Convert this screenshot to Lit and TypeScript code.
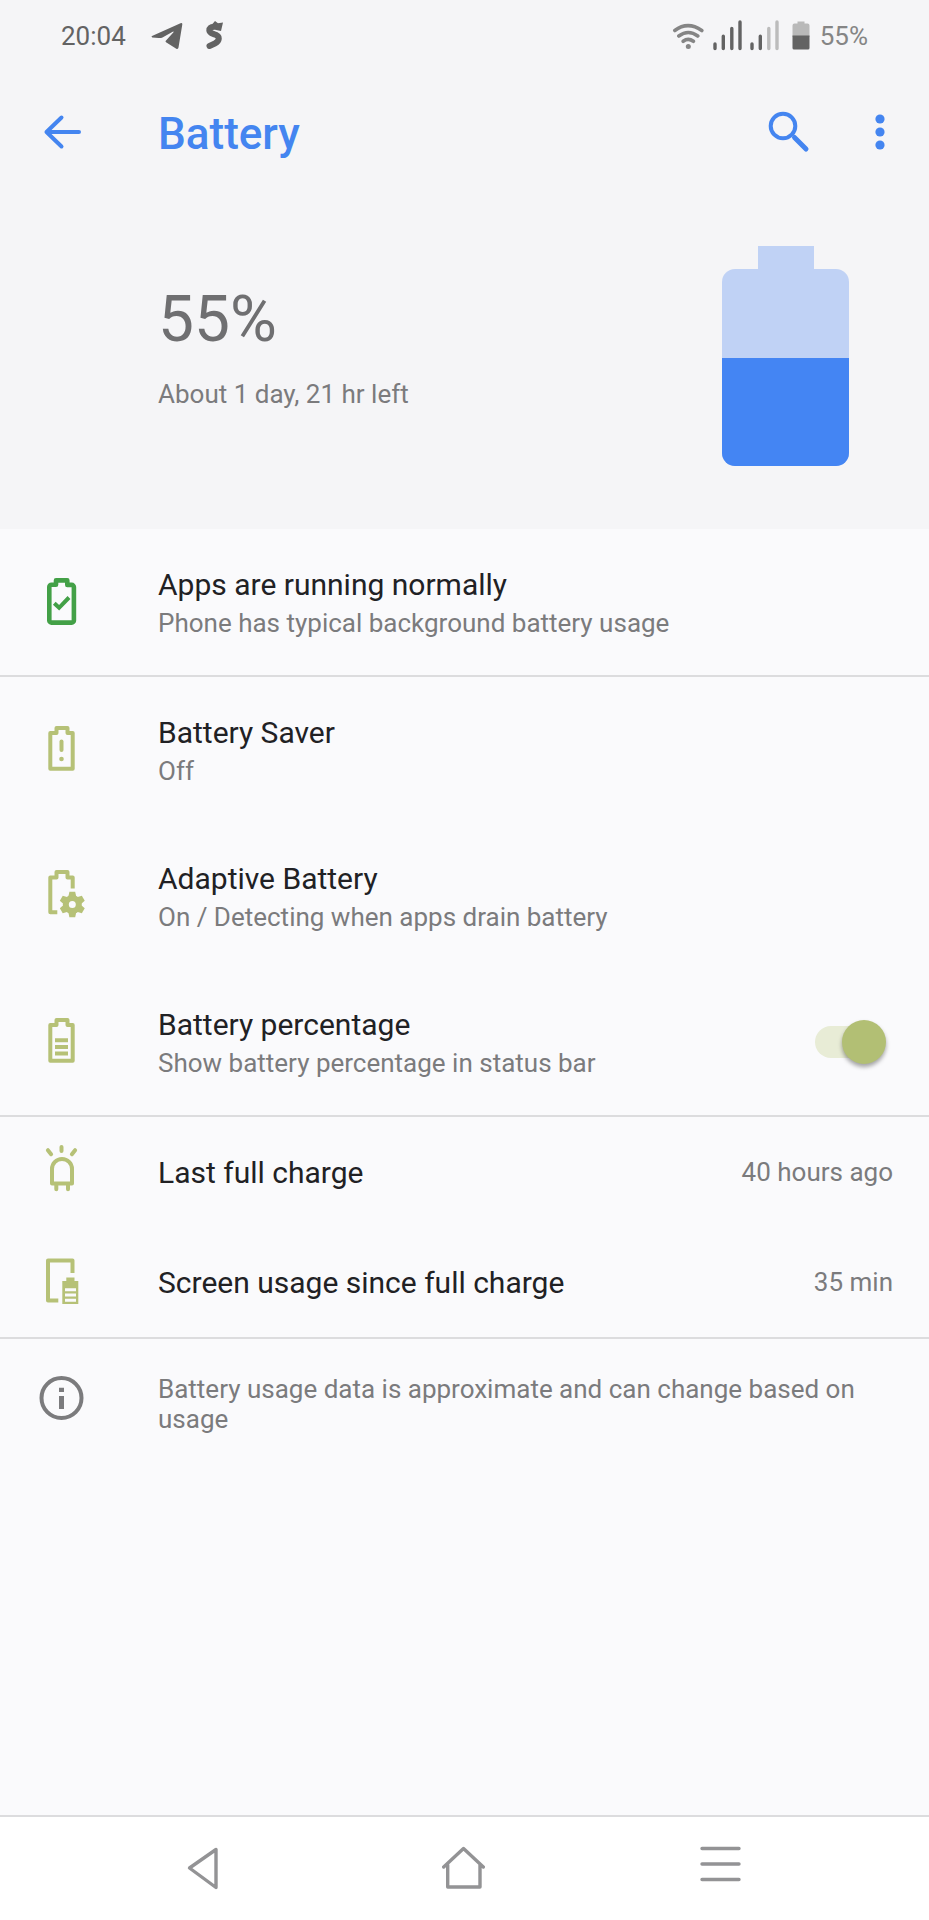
import { LitElement, html, svg, css, nothing, TemplateResult } from 'lit';
import { customElement, property, state } from 'lit/decorators.js';

const cell = svg`<path d="M19.5 2h11v5h5.2v35.7H13.3V7h6.2z" />`;

const icons: Record<string, TemplateResult> = {
  normal: html`
    <svg viewBox="0 0 48 48" class="line">
      <path d="M19 2.4h11.3v4.5h4.4a2.2 2.2 0 0 1 2.2 2.2v33.3a2.2 2.2 0 0 1-2.2 2.2H14.5a2.2 2.2 0 0 1-2.2-2.2V9a2.2 2.2 0 0 1 2.2-2.2H19z" stroke-width="4.6" />
      <path d="M17.3 25.3l4.8 4.5L32 19.5" stroke-linejoin="miter" />
    </svg>`,
  saver: html`
    <svg viewBox="0 0 48 48" class="line">
      ${cell}
      <path d="M24.5 15.5v8.5" stroke-linecap="round" />
      <circle class="solid" cx="24.5" cy="33" r="2.3" />
    </svg>`,
  adaptive: html`
    <svg viewBox="0 2 48 48" class="line">
      <path d="M35.7 18.5V7.5h-5.2V2h-11v5.5h-6.2v34.7h7" />
      <circle cx="35.3" cy="34.5" r="6.5" stroke-width="6" />
      ${[0, 60, 120, 180, 240, 300].map(
        (angle) => svg`<path class="solid" transform="rotate(${angle} 35.3 34.5)" d="M31.3 27l1.1-5.2h5.8l1.1 5.2z" />`
      )}
    </svg>`,
  percentage: html`
    <svg viewBox="0 0 48 48" class="line">
      ${cell}
      <path d="M18 22.2h13M18 29h13M18 35.6h13" />
    </svg>`,
  led: html`
    <svg viewBox="0 3 48 48" class="line">
      <path d="M15 38.6V24a10 10 0 0 1 20 0v14.6z" />
      <path d="M24.5 2v4M10.9 5.2l3.2 4M38.1 5.2l-3.2 4M19.3 40v4.3M31 40v4.3" stroke-linecap="round" />
    </svg>`,
  screen: html`
    <svg viewBox="0 0 48 48" class="line">
      <path d="M35.5 15V2.5H11v40h10.3" />
      <path class="solid" fill-rule="evenodd" d="M29.3 19.5h8.2V23h3.8v23h-16V23h4zM28 30.3v3h11v-3zM28 35.6v3h11v-3zM28 40.8v3h11v-3z" />
    </svg>`,
  info: html`
    <svg viewBox="0 0 48 48" class="line">
      <circle cx="24.5" cy="24" r="20" />
      <path d="M24.5 13.7v4.4M24.5 22v13" stroke-width="5" />
    </svg>`,
};

@customElement('setting-row')
export class SettingRow extends LitElement {
  @property() icon = '';
  @property() heading = '';
  @property() summary = '';
  @property() value = '';
  @property() tone = 'olive';

  static styles = css`
    :host {
      display: flex;
      align-items: center;
      box-sizing: border-box;
      min-height: 110px;
      padding: 0 36px 0 37px;
    }

    svg {
      display: block;
      flex: none;
      width: 48px;
      height: 48px;
      overflow: visible;
    }

    .icon {
      flex: none;
      margin-right: 73px;
      color: #b6c177;
    }

    .icon.green {
      color: #43a047;
    }

    .line {
      fill: none;
      stroke: currentColor;
      stroke-width: 4;
      stroke-linejoin: round;
    }

    .solid {
      fill: currentColor;
      stroke: none;
    }

    .text {
      flex: 1;
      min-width: 0;
      padding: 36px 0 34px;
    }

    .heading {
      font-size: 30px;
      line-height: 40px;
      color: #212124;
    }

    .summary,
    .value {
      font-size: 26px;
      line-height: 36px;
      color: #7b7b7d;
    }
  `;

  render() {
    return html`
      <span class="icon ${this.tone}">${icons[this.icon]}</span>
      <div class="text">
        <div class="heading">${this.heading}</div>
        ${this.summary ? html`<div class="summary">${this.summary}</div>` : nothing}
      </div>
      ${this.value ? html`<div class="value">${this.value}</div>` : nothing}
      <slot></slot>
    `;
  }
}

@customElement('app-root')
export class AppRoot extends LitElement {
  @state() private level = 55;
  @state() private showPercentage = true;

  static styles = css`
    :host {
      display: flex;
      flex-direction: column;
      min-height: 100vh;
      background: #fafafc;
      color: #7b7b7d;
      font-family: Roboto, 'Liberation Sans', sans-serif;
      font-size: 26px;
    }

    button {
      display: flex;
      align-items: center;
      justify-content: center;
      padding: 0;
      border: 0;
      background: none;
      color: inherit;
      cursor: pointer;
    }

    svg {
      display: block;
      flex: none;
    }

    .line {
      fill: none;
      stroke: currentColor;
      stroke-width: 4;
      stroke-linejoin: round;
      stroke-linecap: round;
    }

    .top {
      background: #f5f5f7;
    }

    .status {
      display: flex;
      align-items: center;
      height: 72px;
      padding: 0 61px;
      line-height: 30px;
      color: #636363;
    }

    .notifications {
      display: flex;
      gap: 11px;
      margin-left: 24px;
    }

    .signals {
      display: flex;
      align-items: center;
      margin-left: auto;
    }

    .level {
      color: #858585;
    }

    .toolbar {
      display: flex;
      align-items: center;
      height: 120px;
      padding: 0 25px 0 37px;
      color: #4485f0;
    }

    .toolbar button {
      width: 48px;
      height: 48px;
    }

    h1 {
      flex: 1;
      margin: 0;
      padding: 4px 0 0 73px;
      font-size: 44px;
      font-weight: 500;
      line-height: 52px;
    }

    .toolbar .more {
      margin-left: 44px;
    }

    .overview {
      display: flex;
      justify-content: space-between;
      padding: 54px 80px 63px 158px;
    }

    .numbers {
      padding-top: 37px;
    }

    .big {
      margin-bottom: 22px;
      font-size: 64px;
      line-height: 74px;
      color: #6f6f71;
    }

    .left {
      line-height: 30px;
    }

    .gauge {
      display: flex;
      flex-direction: column;
      align-items: center;
      width: 127px;
    }

    .cap {
      width: 56px;
      height: 23px;
      background: #c0d2f5;
    }

    .body {
      display: flex;
      align-items: flex-end;
      width: 100%;
      height: 197px;
      border-radius: 13px;
      overflow: hidden;
      background: #c0d2f5;
    }

    .fill {
      width: 100%;
      background: #4485f3;
    }

    .group + .group {
      border-top: 2px solid #dcdcde;
    }

    .note {
      display: flex;
      align-items: flex-start;
      padding: 35px 72px 36px 37px;
    }

    .note svg {
      width: 48px;
      height: 48px;
      margin-right: 73px;
    }

    .note .line {
      stroke-linecap: butt;
    }

    .note p {
      margin: 0;
      line-height: 30px;
    }

    .track {
      display: flex;
      align-items: center;
      position: relative;
      width: 71px;
      height: 44px;
      margin-right: 7px;
    }

    .track::before {
      content: '';
      width: 62px;
      height: 32px;
      border-radius: 16px;
      background: #e0e0e0;
    }

    .track.on::before {
      background: #e8ecd6;
    }

    .track input {
      appearance: none;
      position: absolute;
      left: 0;
      top: 0;
      width: 44px;
      height: 44px;
      margin: 0;
      border-radius: 50%;
      background: #f5f5f5;
      box-shadow: 0 3px 4px rgba(0, 0, 0, 0.35);
      cursor: pointer;
    }

    .track input:checked {
      left: auto;
      right: 0;
      background: #b2bf74;
    }

    nav {
      display: grid;
      grid-template-columns: repeat(3, 1fr);
      margin-top: auto;
      height: 103px;
      padding: 0 80px 0 72px;
      border-top: 2px solid #dcdcde;
      background: #fff;
      color: #939395;
    }
  `;

  private toggle(e: Event) {
    this.showPercentage = (e.target as HTMLInputElement).checked;
  }

  private renderStatus() {
    return html`
      <div class="status">
        <span class="clock">20:04</span>
        <div class="notifications">
          <svg width="34" height="34" viewBox="0 0 34 34" fill="currentColor">
            <path d="M2 17L30.5 4.2q2-.5 1.8 1.2L28.5 28.5q-.4 2-2.2 1.2L16 23.3q-.9-.6-.2-1.5l7.7-8.5q.5-1-.8-.6L12.5 18.4q-2 1-3.8.6L2.3 18.5q-1.5-.6-.3-1.5z" />
          </svg>
          <svg width="34" height="34" viewBox="0 0 34 34" fill="currentColor">
            <path
              d="M23 7.8h-4q-5 .4-4.700 3.700.3 2 4 3.500 5.700 1.500 5.500 4.500-.2 3-4 5L14.500 27"
              fill="none"
              stroke="currentColor"
              stroke-width="6"
              stroke-linecap="round"
            />
            <path d="M17 5.500L20 2l3 2.200 5-.7-2 8.500-5-1z" />
          </svg>
        </div>
        <div class="signals">
          <svg width="193" height="34" viewBox="0 0 193 34">
            <g fill="none" stroke="#858585" stroke-width="3.6" stroke-linecap="round">
              <path d="M47.8 11.5q13-9.600 27 0M51.8 17q9.500-7 19 0M56.2 22.3q5-3.800 10.200 0" />
            </g>
            <circle cx="61.3" cy="27.5" r="2.5" fill="#858585" />
            <g fill="none" stroke-width="3.4" stroke-linecap="round">
              <path stroke="#636363" d="M88 25v4.5M96.3 17.3v12.2M104.8 9.5v20M113 3v26.5M125 25v4.5M133.3 17.3v12.2" />
              <path stroke="#bcbcbc" d="M141.8 9.5v20M150 3v26.5" />
            </g>
            <path fill="#b9b9b9" d="M170.5 2.5h7v2h3q2 0 2 2V18h-17V6.500q0-2 2-2h3z" />
            <path fill="#636363" d="M165.5 16.5h17V29q0 1.500-1.500 1.500h-14q-1.500 0-1.500-1.500z" />
          </svg>
          <span class="level">${this.level}%</span>
        </div>
      </div>
    `;
  }

  private renderToolbar() {
    return html`
      <header class="toolbar">
        <button aria-label="Back">
          <svg width="48" height="48" viewBox="0 0 48 48" class="line">
            <path d="M24.5 9.5L9.5 24l15 14.5M9.5 24H42" />
          </svg>
        </button>
        <h1>Battery</h1>
        <button aria-label="Search">
          <svg width="48" height="48" viewBox="0 0 48 48" class="line">
            <circle cx="19" cy="18" r="12.3" />
            <path d="M30.5 29.5L42 41" stroke-width="5" />
          </svg>
        </button>
        <button class="more" aria-label="More options">
          <svg width="48" height="48" viewBox="0 0 48 48" fill="currentColor">
            <circle cx="24" cy="11" r="4.6" />
            <circle cx="24" cy="24" r="4.6" />
            <circle cx="24" cy="37" r="4.6" />
          </svg>
        </button>
      </header>
    `;
  }

  render() {
    return html`
      <div class="top">
        ${this.renderStatus()}
        ${this.renderToolbar()}
        <section class="overview">
          <div class="numbers">
            <div class="big">${this.level}%</div>
            <div class="left">About 1 day, 21 hr left</div>
          </div>
          <div class="gauge">
            <div class="cap"></div>
            <div class="body"><div class="fill" style="height:${this.level}%"></div></div>
          </div>
        </section>
      </div>

      <main>
        <section class="group">
          <setting-row
            icon="normal"
            tone="green"
            heading="Apps are running normally"
            summary="Phone has typical background battery usage"
          ></setting-row>
        </section>
        <section class="group">
          <setting-row icon="saver" heading="Battery Saver" summary="Off"></setting-row>
          <setting-row
            icon="adaptive"
            heading="Adaptive Battery"
            summary="On / Detecting when apps drain battery"
          ></setting-row>
          <setting-row
            icon="percentage"
            heading="Battery percentage"
            summary="Show battery percentage in status bar"
          >
            <label class="track ${this.showPercentage ? 'on' : ''}">
              <input
                type="checkbox"
                role="switch"
                aria-label="Battery percentage"
                .checked=${this.showPercentage}
                @change=${this.toggle}
              />
            </label>
          </setting-row>
        </section>
        <section class="group">
          <setting-row icon="led" heading="Last full charge" value="40 hours ago"></setting-row>
          <setting-row icon="screen" heading="Screen usage since full charge" value="35 min"></setting-row>
        </section>
        <section class="group note">
          ${icons.info}
          <p>Battery usage data is approximate and can change based on usage</p>
        </section>
      </main>

      <nav>
        <button aria-label="Back">
          <svg width="48" height="48" viewBox="0 0 48 48" class="line">
            <path d="M38 4.5v38L11.5 23z" stroke-width="3.4" />
          </svg>
        </button>
        <button aria-label="Home">
          <svg width="48" height="48" viewBox="0 0 48 48" class="line">
            <path d="M6.7 22L26.5 3.5 46.3 22M10.7 20v22H43V20" stroke-width="3.4" />
          </svg>
        </button>
        <button aria-label="Recent apps">
          <svg width="48" height="48" viewBox="0 0 48 48" class="line">
            <path d="M6 3.5h37M6 19h37M6 34.5h37" stroke-width="3.4" />
          </svg>
        </button>
      </nav>
    `;
  }
}
